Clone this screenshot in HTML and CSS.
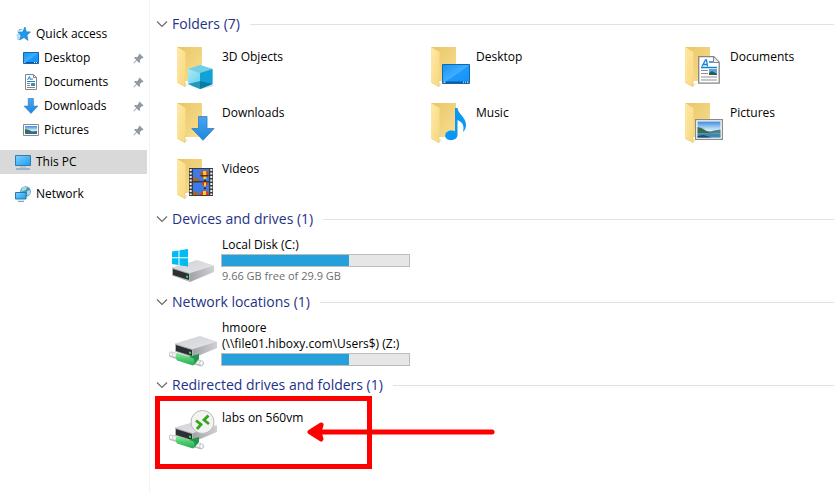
FILE: index.html
```html
<!DOCTYPE html>
<html lang="en">
<head>
  <meta charset="UTF-8">
  <meta name="viewport" content="width=device-width, initial-scale=1">
  <title>This PC</title>
  <link rel="stylesheet" href="styles.css">
</head>
<body>
  <!-- shared icon parts -->
  <svg class="defs" aria-hidden="true">
    <defs>
      <linearGradient id="gBack" x1="0" y1="0" x2="1" y2="1"><stop offset="0" stop-color="#e9c566"/><stop offset="1" stop-color="#f8df92"/></linearGradient>
      <linearGradient id="gFlap" x1="0" y1="0" x2="1" y2="1"><stop offset="0" stop-color="#ffe9a6"/><stop offset="1" stop-color="#f8d880"/></linearGradient>
      <linearGradient id="gScreen" x1="0" y1="0" x2="1" y2="1"><stop offset="0" stop-color="#1590f5"/><stop offset=".5" stop-color="#3fb0ff"/><stop offset=".52" stop-color="#1f9bfb"/><stop offset="1" stop-color="#1590f5"/></linearGradient>
      <linearGradient id="gPc" x1="0" y1="0" x2="1" y2="1"><stop offset="0" stop-color="#7cd3ff"/><stop offset="1" stop-color="#1d9bf0"/></linearGradient>
      <linearGradient id="gArrow" x1="0" y1="0" x2="0" y2="1"><stop offset="0" stop-color="#4ba5ee"/><stop offset="1" stop-color="#1f86dc"/></linearGradient>
      <linearGradient id="gSky" x1="0" y1="0" x2="0" y2="1"><stop offset="0" stop-color="#3c8de0"/><stop offset=".55" stop-color="#d6ecf8"/><stop offset="1" stop-color="#8fc0e0"/></linearGradient>
      <linearGradient id="gTop" x1="0" y1="0" x2="1" y2="1"><stop offset="0" stop-color="#cfd0d4"/><stop offset="1" stop-color="#e6e6e9"/></linearGradient>
      <linearGradient id="gSide" x1="0" y1="0" x2="1" y2="0"><stop offset="0" stop-color="#a2a3a7"/><stop offset="1" stop-color="#cfd0d3"/></linearGradient>
      <linearGradient id="gPipe" x1="0" y1="0" x2="0" y2="1"><stop offset="0" stop-color="#8feaa0"/><stop offset=".5" stop-color="#4bcb6c"/><stop offset="1" stop-color="#2aa653"/></linearGradient>
      <linearGradient id="gCube" x1="0" y1="0" x2="1" y2="1"><stop offset="0" stop-color="#b6eefa"/><stop offset="1" stop-color="#3fc3e2"/></linearGradient>
      <symbol id="folder" viewBox="0 0 48 48">
        <path d="M7 4h25v34H13z" fill="url(#gBack)"/>
        <path d="M15 40l3 1-3 3z" fill="#e6e6e6"/>
        <path d="M7 4l8.500 5v26l-.5 1v8L7 39.500z" fill="url(#gFlap)"/>
        <path d="M7.500 39.500L15 43.500V36" fill="none" stroke="#ecc768" stroke-width=".6"/>
      </symbol>
      <symbol id="drive" viewBox="0 0 44 24">
        <path d="M1 7.500L26 0l17 5.500L19 13z" fill="url(#gTop)"/>
        <path d="M19 13l24-7.500V12L19 22z" fill="url(#gSide)"/>
        <path d="M1 7.500L19 13v9L1 15.500z" fill="#b4b5b9"/>
        <path d="M2 9l16 5v6L2 15z" fill="#2d3033"/>
        <path d="M15 15.500l2 .6v2l-2-.6z" fill="#2ee63f"/>
      </symbol>
      <symbol id="pipe" viewBox="0 0 36 16">
        <path d="M2.500 3.500L32 12.500" stroke="#b6bbbd" stroke-width="5.500" stroke-linecap="round"/>
        <path d="M2.500 3L32 12" stroke="#edf0f1" stroke-width="3.800" stroke-linecap="round"/>
        <path d="M19 6l11-3v5l-5 6z" fill="#20964a"/>
        <path d="M8 2l16 5.200c2 1.500 2 5.800 0 7.300L8 9.500c-1.800-2-1.800-5.500 0-7.500z" fill="url(#gPipe)"/>
        <ellipse cx="32.500" cy="12.200" rx="1.700" ry="2.500" fill="#fff" stroke="#aaa" stroke-width=".6"/>
        <ellipse cx="2" cy="3.300" rx="1.500" ry="2.300" fill="#fff" stroke="#bbb" stroke-width=".6"/>
      </symbol>
      <symbol id="page" viewBox="0 0 22 28">
        <path d="M.7.700h15l5.500 5.500v21H.7z" fill="#fff" stroke="#858585" stroke-width="1.300"/>
        <path d="M15.500 1v5.500H21" fill="#eee" stroke="#858585"/>
        <path d="M4 10.500l3.500-6.500h1l1 6.500M5 8.500h4" fill="none" stroke="#1583d4" stroke-width="1.300"/>
        <path d="M11 6h4M3 11.500h16" stroke="#1583d4" stroke-width="1.300"/>
        <path d="M3 14.500h7M3 17.500h7M3 21h16M3 24h16" stroke="#909090"/>
        <path d="M11 13h8v6h-8z" fill="#5da4dc"/><path d="M11 17l3-2 5 3v1h-8z" fill="#2a5a50"/>
      </symbol>
      <symbol id="photo" viewBox="0 0 28 21">
        <path d="M.6.600h26.800v19.800H.6z" fill="#fff" stroke="#8a8a8a" stroke-width="1.200"/>
        <path d="M2.500 2.500h23v16h-23z" fill="url(#gSky)"/>
        <path d="M2.500 8l4 1 5 3 6 1v1.500h-15z" fill="#386b52"/>
        <path d="M14 13l5-1.500 6.500-1v4H14z" fill="#4e7f83"/>
        <path d="M2.500 14.500h23v4h-23z" fill="#3d86b6"/>
        <path d="M2.500 17l6-1 8 2.500h-14z" fill="#1e4c68"/>
      </symbol>
      <symbol id="down" viewBox="0 0 24 25">
        <path d="M7.500.500h8.500v12h7L12 24.300.8 12.500h6.700z" fill="url(#gArrow)" stroke="#2a7ec9" stroke-width=".8"/>
      </symbol>
      <symbol id="screen" viewBox="0 0 28 20">
        <path d="M.5.500h27v19H.5z" fill="url(#gScreen)" stroke="#1268ac"/>
        <path d="M1 17.500h26v1.500H1z" fill="#0a5aa8"/>
        <path d="M1.500 18.200h2M21 18.200h1M23 18.200h1M25 18.200h1.500" stroke="#fff"/>
      </symbol>
      <symbol id="pin" viewBox="0 0 12 12">
        <path d="M7 .500L11.500 5l-1 .8-1-.2-2 2 .2 2.200-1 1L4.200 8.300 1 11.500l-.6-.6L3.500 7.600 1.200 5.300l1-1 2.200.2 2-2-.2-1z" fill="#8d98a3"/>
      </symbol>
      <symbol id="chevron" viewBox="0 0 12 8">
        <path d="M1 1.500l5 5 5-5" fill="none" stroke="#6b6b6b" stroke-width="1.200"/>
      </symbol>
    </defs>
  </svg>

  <div class="explorer">
    <!-- navigation pane -->
    <nav class="sidebar" aria-label="Navigation pane">
      <a class="nav-item" href="#quick">
        <svg viewBox="0 0 16 16"><path d="M10 1l1.300 4.700 4.200.3-3.500 3 1 5.500L9 11.500 4.500 14l1.300-4.600L3 6.300l4.500-.4z" fill="#1e98ea" stroke="#1678c4" stroke-width=".6"/><path d="M4 3.500h3M2.500 5h3M1.500 9h3M2 11h2.500M2 13h2" stroke="#64b9f0"/></svg>
        <span>Quick access</span>
      </a>
      <a class="nav-item sub" href="#desktop">
        <svg viewBox="0 0 16 16"><path d="M.5 2.500h15v11H.5z" fill="url(#gScreen)" stroke="#0f68b2"/><path d="M1 12.500h14" stroke="#0b5298"/><path d="M1.500 12.500h1M11 12.500h1M13 12.500h1" stroke="#fff"/></svg>
        <span>Desktop</span>
        <svg class="pin"><use href="#pin"/></svg>
      </a>
      <a class="nav-item sub" href="#documents">
        <svg viewBox="0 0 16 16"><path d="M2.500.500h8l3 3v12h-11z" fill="#fff" stroke="#858585"/><path d="M10.500.500v3h3" fill="none" stroke="#858585"/><path d="M4.500 6l2-3.500L7.500 6M4 7.500h8M8 5h2" fill="none" stroke="#1583d4"/><path d="M4 9.500h3M4 11.500h3M4 13.500h8" stroke="#858585"/><path d="M8 9h4v3H8z" fill="#458d9c"/></svg>
        <span>Documents</span>
        <svg class="pin"><use href="#pin"/></svg>
      </a>
      <a class="nav-item sub" href="#downloads">
        <svg viewBox="0 0 24 25"><use href="#down"/></svg>
        <span>Downloads</span>
        <svg class="pin"><use href="#pin"/></svg>
      </a>
      <a class="nav-item sub" href="#pictures">
        <svg viewBox="0 0 16 16"><path d="M.5 2.500h15v11H.5z" fill="#fff" stroke="#8a8a8a"/><path d="M2 4h12v8H2z" fill="url(#gSky)"/><path d="M2 7l4 1 3 1.500 5-.5v1H2z" fill="#386b52"/><path d="M2 10h12v2H2z" fill="#2e6c96"/></svg>
        <span>Pictures</span>
        <svg class="pin"><use href="#pin"/></svg>
      </a>
      <a class="nav-item root active" href="#this-pc" aria-current="page">
        <svg viewBox="0 0 16 16"><path d="M.5 1.500h15v10H.5z" fill="url(#gPc)" stroke="#337caa"/><path d="M5 13h6" stroke="#a3b4bf"/><path d="M1 15h14" stroke="#5f8fac"/></svg>
        <span>This PC</span>
      </a>
      <a class="nav-item root" href="#network">
        <svg viewBox="0 0 16 16"><circle cx="10.500" cy="5.500" r="5.300" fill="#4d93b9"/><path d="M7 2q3-2 5-1l-1 3-3 1-2 1zM12 5l3-1v4l-3 2z" fill="#a9dcdf"/><path d="M.5 6.500h10.500v6.500H.5z" fill="url(#gPc)" stroke="#2778ad"/><path d="M3 15.300h6" stroke="#5f8fac"/></svg>
        <span>Network</span>
      </a>
    </nav>

    <main class="content">
      <section>
        <h2 class="group-head"><button type="button" aria-expanded="true"><svg><use href="#chevron"/></svg>Folders (7)</button></h2>
        <ul class="tiles">
          <li><a class="tile" href="#3d-objects">
            <svg viewBox="0 0 48 48"><use href="#folder"/><path d="M20 43l11 3 13-3-6-4z" fill="#ddd"/><path d="M18 26l12-4 12.500 4v15L30 46l-12-5z" fill="url(#gCube)"/><path d="M18 26l12-4 12.500 4L30 30z" fill="#74cfe2"/><path d="M30 30l12.500-4v15L30 46z" fill="#12a2d6"/><path d="M30 38l12.500 3L30 46z" fill="#067ca6"/><path d="M18 41l12-3v8z" fill="#2598b6"/></svg>
            <span class="name">3D Objects</span>
          </a></li>
          <li><a class="tile" href="#desktop">
            <svg viewBox="0 0 48 48"><use href="#folder"/><use href="#screen" x="18" y="21" width="28" height="20"/></svg>
            <span class="name">Desktop</span>
          </a></li>
          <li><a class="tile" href="#documents">
            <svg viewBox="0 0 48 48"><use href="#folder"/><use href="#page" x="20" y="13" width="22" height="28"/></svg>
            <span class="name">Documents</span>
          </a></li>
          <li><a class="tile" href="#downloads">
            <svg viewBox="0 0 48 48"><use href="#folder"/><use href="#down" x="21" y="17" width="24" height="25"/></svg>
            <span class="name">Downloads</span>
          </a></li>
          <li><a class="tile" href="#music">
            <svg viewBox="0 0 48 48"><use href="#folder"/><path d="M31 9h2.500c.5 6 8.500 9 8.500 17 0 3-1 5-3 7 1.500-6 0-9.500-5.500-12v15c0 3-3 5.200-6.500 5.200s-5.800-1.800-5.800-4.600c0-3 3-5 6.300-5 1.500 0 2.700.4 3.500 1z" fill="#0a98f5"/></svg>
            <span class="name">Music</span>
          </a></li>
          <li><a class="tile" href="#pictures">
            <svg viewBox="0 0 48 48"><use href="#folder"/><use href="#photo" x="17" y="20" width="28" height="21"/></svg>
            <span class="name">Pictures</span>
          </a></li>
          <li><a class="tile" href="#videos">
            <svg viewBox="0 0 48 48"><use href="#folder"/>
              <path d="M19 13h24v28H19z" fill="#3b3b3b"/>
              <path d="M20.700 14v26M41.300 14v26" stroke="#eee" stroke-width="2" stroke-dasharray="2 1.500"/>
              <path d="M23 14h16v12H23z" fill="#3b7be8"/><path d="M23 27.500h16V40H23z" fill="#3b7be8"/>
              <path d="M23 22l4 1 4 3h-8zM23 36l5 2 3 2h-8z" fill="#a4652f"/>
              <path d="M30 20a4.500 4.500 0 0 1 9 0l-3.500 4h-2z" fill="#e0401f"/><path d="M33 16h3l.5 8h-3z" fill="#f7cf2c"/><path d="M30 20h9l-1 1.500h-7z" fill="#353f28"/>
              <path d="M31 27.500h8l-3 4h-2z" fill="#d93a1e"/><path d="M34 27.500h2v4h-2z" fill="#f7cf2c"/>
              <path d="M30 40c0-6 9-6 9 0z" fill="#e0401f"/><path d="M33 36h3v4h-3z" fill="#f7cf2c"/>
              <path d="M34 25h2v1h-2zM34 32.500h2V34h-2z" fill="#222"/>
            </svg>
            <span class="name">Videos</span>
          </a></li>
        </ul>
      </section>

      <section>
        <h2 class="group-head"><button type="button" aria-expanded="true"><svg><use href="#chevron"/></svg>Devices and drives (1)</button></h2>
        <ul class="tiles">
          <li><a class="tile drive" href="#c">
            <svg viewBox="0 0 48 48"><use href="#drive" x="1" y="23" width="44" height="24"/><path d="M2 14.500l6.500-1v6.800H2zM9.500 13.300l8.500-1.300v8.300H9.500zM2 21.300h6.500V28L2 27zM9.500 21.300H18v8.200l-8.500-1.200z" fill="#00bcf2"/></svg>
            <div class="info">
              <label class="name" for="usage-c">Local Disk (C:)</label>
              <progress id="usage-c" max="100" value="68"></progress>
              <span class="free">9.66 GB free of 29.9 GB</span>
            </div>
          </a></li>
        </ul>
      </section>

      <section>
        <h2 class="group-head"><button type="button" aria-expanded="true"><svg><use href="#chevron"/></svg>Network locations (1)</button></h2>
        <ul class="tiles">
          <li><a class="tile drive" href="#z">
            <svg viewBox="0 0 48 48"><use href="#drive" x="4" y="16" width="44" height="24"/><use href="#pipe" x="-1" y="31" width="36" height="16"/></svg>
            <div class="info">
              <label class="name" for="usage-z">hmoore<br>(\\file01.hiboxy.com\Users$) (Z:)</label>
              <progress id="usage-z" max="100" value="68"></progress>
            </div>
          </a></li>
        </ul>
      </section>

      <section>
        <h2 class="group-head"><button type="button" aria-expanded="true"><svg><use href="#chevron"/></svg>Redirected drives and folders (1)</button></h2>
        <ul class="tiles">
          <li class="marked">
            <a class="tile" href="#labs">
              <svg viewBox="0 0 48 48"><use href="#drive" x="4" y="16" width="44" height="24"/><use href="#pipe" x="-1" y="30" width="36" height="16"/><circle cx="32.500" cy="18" r="11.500" fill="#f3f3f3" stroke="#b9b9b9"/><path d="M26 16.500l5 4-4 4.500M38.500 11.500l-4.500 4.500 5 4" fill="none" stroke="#35a51d" stroke-width="2.800"/></svg>
              <span class="name">labs on 560vm</span>
            </a>
            <!-- callout -->
            <div class="callout-box"></div>
            <svg class="callout-arrow" viewBox="0 0 190 24" aria-hidden="true"><path d="M10 12h176" stroke="#f00" stroke-width="5" stroke-linecap="round"/><path d="M15 5L4 12l11 7-2-7z" fill="#f00" stroke="#f00" stroke-width="5" stroke-linejoin="round"/></svg>
          </li>
        </ul>
      </section>
    </main>
  </div>
</body>
</html>
```

FILE: styles.css
```css
* { box-sizing:border-box; }
body { margin:0; background:#fff; color:#000; font-family:"Open Sans", "Noto Sans", sans-serif; font-size:12px; line-height:16px; }
a { color:inherit; text-decoration:none; }
svg { flex:none; overflow:visible; }
.defs { position:absolute; width:0; height:0; }

.explorer { display:flex; min-height:100vh; }

/* navigation pane */
.sidebar { flex:none; width:150px; padding:22px 2px 0 0; border-right:1px solid #f3f3f3; }
.nav-item { display:flex; align-items:center; gap:5px; height:24px; padding-left:15px; }
.nav-item svg { width:16px; height:16px; }
.nav-item.sub { padding-left:23px; }
.nav-item.root { margin-top:8px; }
.nav-item.active { background:#d9d9d9; }
.nav-item .pin { width:11px; height:11px; margin:0 3px 0 auto; }

/* groups */
.content { flex:1; min-width:0; padding-top:12px; }
.group-head { display:flex; align-items:center; height:24px; margin:0; font-size:14px; font-weight:400; }
.group-head::after { content:""; flex:1; height:1px; margin-left:10px; background:#e2e2e2; }
.group-head button { display:flex; align-items:center; gap:4px; padding:0 0 0 6px; border:0; background:none; color:#1e3287; font:inherit; line-height:24px; cursor:pointer; }
.group-head svg { width:12px; height:8px; }

.tiles { display:grid; grid-template-columns:254px 254px 1fr; margin:0; padding:3px 0 0 20px; list-style:none; }
.tile { display:flex; gap:4px; height:56px; padding-top:4px; }
.tile svg { width:48px; height:48px; }
.tile .name { padding-top:6px; }
.info { display:flex; flex-direction:column; }
.tile.drive { padding-top:3px; }
.tile.drive .name { padding-top:0; }
.free { color:#6d6d6d; font-size:11px; }
progress { appearance:none; width:189px; height:13px; margin:1px 0 1px -1px; border:1px solid #bcbcbc; background:#e6e6e6; }
progress::-webkit-progress-bar { background:#e6e6e6; }
progress::-webkit-progress-value { background:#26a0da; }

/* callout around the redirected drive */
.marked { position:relative; }
.callout-box { position:absolute; top:-4px; left:-15px; width:217px; height:73px; border:5px solid #f00; pointer-events:none; }
.callout-arrow { position:absolute; top:20px; left:136px; width:190px; height:24px; pointer-events:none; }
```
